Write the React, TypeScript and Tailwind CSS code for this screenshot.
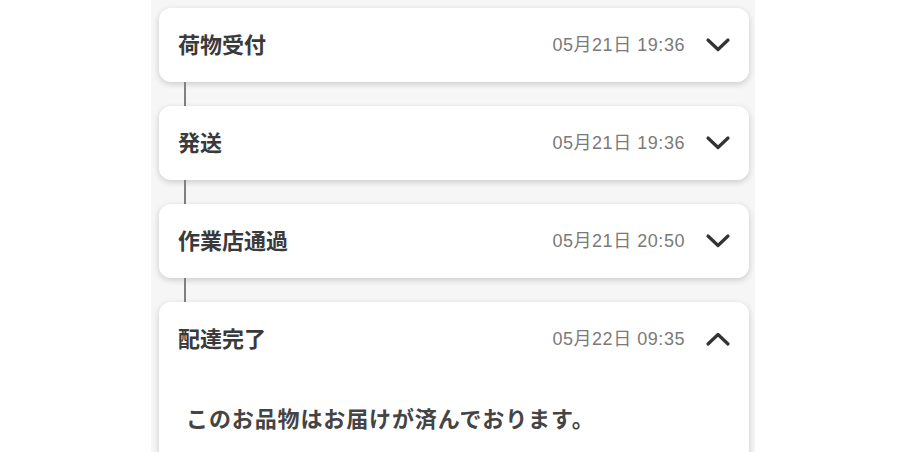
import React, { useState } from 'react';

type Step = { id: string; title: string; time: string; detail?: string };

const steps: Step[] = [
  { id: 's1', title: '荷物受付', time: '05月21日 19:36' },
  { id: 's2', title: '発送', time: '05月21日 19:36' },
  { id: 's3', title: '作業店通過', time: '05月21日 20:50' },
  { id: 's4', title: '配達完了', time: '05月22日 09:35', detail: 'このお品物はお届けが済んでおります。' },
];

const Chevron: React.FC<{ up?: boolean }> = ({ up }) => (
  <svg width="26" height="16" viewBox="0 0 26 16" className="shrink-0">
    <path
      d={up ? 'M3 13 L13 3.5 L23 13' : 'M3 3 L13 12.5 L23 3'}
      fill="none"
      stroke="#333"
      strokeWidth="3.2"
      strokeLinecap="round"
      strokeLinejoin="round"
    />
  </svg>
);

const App: React.FC = () => {
  const [open, setOpen] = useState<string>('s4');

  return (
    <div className="w-full h-[452px] bg-white overflow-hidden font-['Noto_Sans_CJK_JP',sans-serif]">
      <div className="ml-[151px] w-[604px] h-full bg-[#f6f6f6] pl-2 pr-[6px] pt-2">
        {steps.map((s, i) => {
          const isOpen = open === s.id;
          return (
            <div key={s.id}>
              {i > 0 && <div className="ml-[25px] w-[2px] h-6 bg-[#808080]" />}
              <div className="bg-white rounded-xl shadow-[0_2px_6px_rgba(0,0,0,0.18)]">
                <button
                  onClick={() => setOpen(isOpen ? '' : s.id)}
                  className="w-full h-[74px] flex items-center pl-[19px] pr-[18px] text-left"
                >
                  <span className="flex-1 text-[22px] font-bold text-[#3a3a3a] -mt-[3px]">{s.title}</span>
                  <span className="text-[18px] tracking-[0.03em] text-[#7a7a7a] font-['Liberation_Sans','Noto_Sans_CJK_JP',sans-serif] mr-[20px]">
                    {s.time}
                  </span>
                  <Chevron up={isOpen} />
                </button>
                {isOpen && s.detail && (
                  <div className="pl-[27px] pt-[25px] pb-8 text-[22px] tracking-[0.04em] font-bold text-[#444]">{s.detail}</div>
                )}
              </div>
            </div>
          );
        })}
      </div>
    </div>
  );
};

export default App;
